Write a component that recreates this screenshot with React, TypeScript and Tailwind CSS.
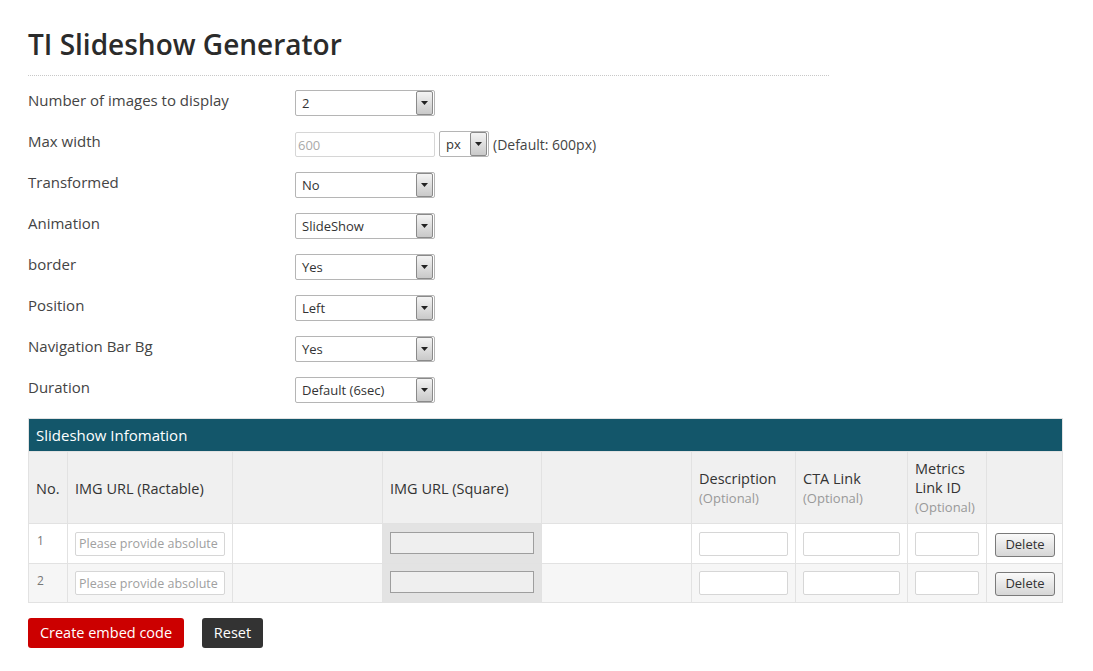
import React from "react";

const font = { fontFamily: '"Open Sans", "Noto Sans", sans-serif' };

const Arrow = () => (
  <span className="flex h-[24px] w-[17px] shrink-0 items-center justify-center rounded-[2px] border border-[#8a8a8a] bg-gradient-to-b from-[#f4f4f4] to-[#c9c9c9]">
    <svg width="7" height="4" viewBox="0 0 7 4">
      <path d="M0 0 L7 0 L3.5 4 Z" fill="#222" />
    </svg>
  </span>
);

const Select = ({ value, w = "w-[140px]" }: { value: string; w?: string }) => (
  <div
    className={`flex h-[26px] ${w} items-center justify-between rounded-[2px] border border-[#b5b5b5] bg-white pl-[6px] pr-[1px] text-[13px] text-[#333]`}
  >
    <span className="pt-[1px]">{value}</span>
    <Arrow />
  </div>
);

const rows: { label: string; value: string }[] = [
  { label: "Transformed", value: "No" },
  { label: "Animation", value: "SlideShow" },
  { label: "border", value: "Yes" },
  { label: "Position", value: "Left" },
  { label: "Navigation Bar Bg", value: "Yes" },
  { label: "Duration", value: "Default (6sec)" },
];

const Row = ({ label, children }: { label: string; children: React.ReactNode }) => (
  <div className="flex h-[41px] items-start">
    <div className="w-[267px] text-[15px] leading-[20px] text-[#444]">{label}</div>
    {children}
  </div>
);

const inputCls =
  "block h-[24px] w-full rounded-[2px] border border-[#d6d6d6] bg-white px-[3px] text-[12.5px] text-[#999] outline-none placeholder:text-[#a0a0a0]";

const cell = "border border-[#e2e2e2]";

const BodyRow = ({ n, bg, h }: { n: number; bg: string; h: string }) => (
  <tr className={`${bg} ${h}`}>
    <td className={`${cell} px-[8px] pt-[8px] align-top text-[12px] text-[#777]`}>{n}</td>
    <td className={`${cell} px-[7px] align-middle`}>
      <input className={inputCls} placeholder="Please provide absolute" />
    </td>
    <td className={cell}></td>
    <td className={`${cell} bg-[#e3e3e3] px-[7px] align-middle`}>
      <div className="mb-[2px] h-[22px] w-full border border-[#9e9e9e] bg-[#efefef]" />
    </td>
    <td className={cell}></td>
    <td className={`${cell} px-[7px] align-middle`}>
      <input className={inputCls} />
    </td>
    <td className={`${cell} px-[7px] align-middle`}>
      <input className={inputCls} />
    </td>
    <td className={`${cell} px-[7px] align-middle`}>
      <input className={inputCls} />
    </td>
    <td className={`${cell} px-[8px] align-middle`}>
      <button className="mt-[2px] block h-[24px] w-[60px] rounded-[3px] border border-[#7a7a7a] bg-gradient-to-b from-[#fafafa] to-[#d6d6d6] text-[13px] text-[#333]">
        Delete
      </button>
    </td>
  </tr>
);

export default function App() {
  return (
    <div className="min-h-[671px] bg-white pl-[28px] pt-[24px]" style={font}>
      <h1 className="text-[28px] font-semibold leading-[40px] text-[#2b2b2b]">TI Slideshow Generator</h1>
      <div className="mt-[11px] w-[801px] border-b border-dotted border-[#c8c8c8]" />

      <div className="mt-[14px]">
        <Row label="Number of images to display">
          <Select value="2" />
        </Row>
        <Row label="Max width">
          <div className="flex items-center">
            <input
              className="mt-[1px] h-[25px] w-[140px] rounded-[2px] border border-[#d6d6d6] px-[2px] text-[13px] text-[#aaa] outline-none"
              defaultValue="600"
            />
            <div className="ml-[4px]">
              <Select value="px" w="w-[50px]" />
            </div>
            <span className="ml-[4px] text-[14px] text-[#444]">(Default: 600px)</span>
          </div>
        </Row>
        {rows.map((r) => (
          <Row key={r.label} label={r.label}>
            <Select value={r.value} />
          </Row>
        ))}
      </div>

      <table className="w-[1035px] table-fixed border-collapse border border-[#e2e2e2]">
        <colgroup>
          <col className="w-[39px]" />
          <col className="w-[165px]" />
          <col className="w-[150px]" />
          <col className="w-[159px]" />
          <col className="w-[150px]" />
          <col className="w-[104px]" />
          <col className="w-[112px]" />
          <col className="w-[79px]" />
          <col className="w-[76px]" />
        </colgroup>
        <thead>
          <tr>
            <th colSpan={9} className="h-[33px] bg-[#13566a] px-[7px] text-left text-[15px] font-normal text-white">
              Slideshow Infomation
            </th>
          </tr>
          <tr className="h-[72px] bg-[#f0f0f0] text-left text-[14.5px] font-normal leading-[19px] text-[#333]">
            <th className={`${cell} px-[7px] pt-[2px] font-normal`}>No.</th>
            <th className={`${cell} px-[7px] pt-[2px] font-normal`}>IMG URL (Ractable)</th>
            <th className={cell}></th>
            <th className={`${cell} px-[7px] pt-[2px] font-normal`}>IMG URL (Square)</th>
            <th className={cell}></th>
            <th className={`${cell} px-[7px] pt-[2px] font-normal`}>
              Description
              <br />
              <span className="text-[13px] text-[#999]">(Optional)</span>
            </th>
            <th className={`${cell} px-[7px] pt-[2px] font-normal`}>
              CTA Link
              <br />
              <span className="text-[13px] text-[#999]">(Optional)</span>
            </th>
            <th className={`${cell} px-[7px] font-normal`}>
              Metrics
              <br />
              Link ID
              <br />
              <span className="text-[13px] text-[#999]">(Optional)</span>
            </th>
            <th className={cell}></th>
          </tr>
        </thead>
        <tbody>
          <BodyRow n={1} bg="bg-white" h="h-[40px]" />
          <BodyRow n={2} bg="bg-[#f6f6f6]" h="h-[39px]" />
        </tbody>
      </table>

      <div className="mt-[15px] flex gap-[18px]">
        <button className="h-[30px] w-[156px] rounded-[3px] bg-[#cc0000] text-[14.5px] text-white">
          Create embed code
        </button>
        <button className="h-[30px] w-[61px] rounded-[3px] bg-[#333] text-[14.5px] text-white">Reset</button>
      </div>
    </div>
  );
}
